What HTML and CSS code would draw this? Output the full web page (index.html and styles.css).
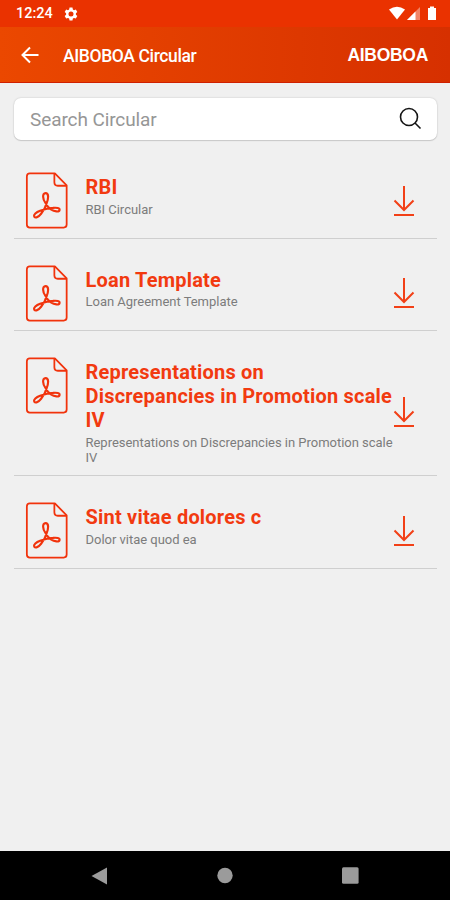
FILE: index.html
```
<!DOCTYPE html>
<html lang="en">

<head>
    <meta charset="UTF-8">
    <meta name="viewport" content="width=device-width, initial-scale=1.0">
    <title>AIBOBOA Circular</title>
    <link rel="stylesheet" href="styles.css">
</head>

<body>
    <!-- Shared icons -->
    <svg class="icon-defs" aria-hidden="true">
        <symbol id="pdf" viewBox="0 0 44 58">
            <path d="M4.500 1.500H30L42 13.500V53.500Q42 56.500 39 56.500H4.500Q1.500 56.500 1.500 53.500V4.500Q1.500 1.500 4.500 1.500Z" />
            <path d="M29.500 2V10.500Q29.500 14 33 14H41.500" />
            <path class="mark" d="M20.500 31.500C17.500 28 17 21.500 20.500 21.500C24.200 21.500 23.500 27.500 21.500 32C20.200 37 18.500 39.500 16 42.500C13.500 45.500 10.500 47.500 9 45.500C8 43.500 11 41 15 39.500C19 38 24 36.700 28 36.500C32 36.200 35 36.500 34.800 38.500C34.500 41 29.500 40.500 26 38C23.500 36.200 21.500 34 20.500 31.500Z" />
        </symbol>
        <symbol id="download" viewBox="0 0 22 32">
            <path d="M11 1V25M1.500 15.500L11 25L20.500 15.500M1 30H21" />
        </symbol>
    </svg>

    <div class="status-bar">
        <span class="time">12:24</span>
        <svg class="gear" viewBox="0 0 24 24">
            <path fill-rule="evenodd" d="M9.500 1h5l.7 3.200 2 1.200 3.100-1 2.500 4.300-2.400 2.200v2.300l2.400 2.200-2.500 4.300-3.100-1-2 1.200-.7 3.200h-5l-.7-3.200-2-1.200-3.100 1-2.500-4.300 2.400-2.200v-2.300L1.200 8.700l2.500-4.300 3.100 1 2-1.200ZM12 7.700a4.300 4.300 0 1 0 0 8.600a4.300 4.300 0 1 0 0-8.600Z" />
        </svg>
        <svg class="signals" viewBox="0 0 48 16">
            <path d="M0 3.500Q8 -2 16 3.500L8 13.500Z" />
            <path class="faint" d="M18 14L31 1V14Z" />
            <path d="M18 14L26.500 5.500V14Z" />
            <path d="M39 2H41V.5H45V2H47V14H39Z" />
        </svg>
    </div>

    <header class="app-bar">
        <svg class="back" viewBox="0 0 18 18">
            <path d="M17.500 9H1.500M9 1.500L1.500 9L9 16.500" />
        </svg>
        <h1>AIBOBOA Circular</h1>
        <span class="brand">AIBOBOA</span>
    </header>

    <main>
        <div class="search">
            <input type="text" placeholder="Search Circular">
            <svg viewBox="0 0 24 24">
                <circle cx="11" cy="10" r="8.500" />
                <path d="M17 16L22.500 21.500" />
            </svg>
        </div>

        <ul class="list">
            <li>
                <svg class="pdf"><use href="#pdf" /></svg>
                <div class="info">
                    <h2>RBI</h2>
                    <p>RBI Circular</p>
                </div>
                <svg class="download"><use href="#download" /></svg>
            </li>
            <li>
                <svg class="pdf"><use href="#pdf" /></svg>
                <div class="info">
                    <h2>Loan Template</h2>
                    <p>Loan Agreement Template</p>
                </div>
                <svg class="download"><use href="#download" /></svg>
            </li>
            <li>
                <svg class="pdf"><use href="#pdf" /></svg>
                <div class="info">
                    <h2>Representations on Discrepancies in Promotion scale IV</h2>
                    <p>Representations on Discrepancies in Promotion scale IV</p>
                </div>
                <svg class="download"><use href="#download" /></svg>
            </li>
            <li>
                <svg class="pdf"><use href="#pdf" /></svg>
                <div class="info">
                    <h2>Sint vitae dolores c</h2>
                    <p>Dolor vitae quod ea</p>
                </div>
                <svg class="download"><use href="#download" /></svg>
            </li>
        </ul>
    </main>

    <nav class="nav-bar">
        <svg viewBox="0 0 18 18"><path d="M.5 9L16 .5V17.500Z" /></svg>
        <svg viewBox="0 0 18 18"><circle cx="9" cy="8.500" r="7.700" /></svg>
        <svg viewBox="0 0 18 18"><rect x="1" y=".2" width="16.600" height="16.600" rx="1.500" /></svg>
    </nav>
</body>

</html>
```
FILE: styles.css
```
* {
    box-sizing: border-box;
}

body {
    font-family: Roboto, sans-serif;
    background-color: #f0f0f0;
    margin: 0;
    height: 900px;
    display: flex;
    flex-direction: column;
    overflow: hidden;
}

h1,
h2,
p,
ul {
    margin: 0;
    padding: 0;
}

svg {
    display: block;
    flex-shrink: 0;
}

.icon-defs {
    position: absolute;
    width: 0;
    height: 0;
}

/* Status bar */
.status-bar {
    height: 27px;
    padding: 0 13px 0 16px;
    display: flex;
    align-items: center;
    background-color: #ea3200;
    color: #fff;
    fill: #fff;
}

.time {
    font-size: 14.5px;
    font-weight: 500;
    width: 48px;
}

.gear {
    width: 14px;
    height: 14px;
}

.signals {
    width: 48px;
    height: 16px;
    margin-left: auto;
}

.faint {
    opacity: 0.4;
}

/* Header */
.app-bar {
    height: 56px;
    padding: 0 22px 0 21px;
    display: flex;
    align-items: center;
    background: linear-gradient(to right, #eb4800, #d63000);
    border-bottom: 1px solid #cf2000;
    color: #fff;
}

.back {
    width: 18px;
    height: 18px;
    fill: none;
    stroke: #fff;
    stroke-width: 2;
}

h1 {
    margin-left: 24px;
    padding-top: 2px;
    font-size: 17.5px;
    font-weight: 500;
    letter-spacing: -0.38px;
}

.brand {
    margin-left: auto;
    padding-top: 1px;
    font-family: "Liberation Sans", Arial, sans-serif;
    font-size: 17.5px;
    font-weight: bold;
    letter-spacing: -0.3px;
}

/* Content */
main {
    flex: 1;
    padding: 15px 13px 0 14px;
}

.search {
    height: 42px;
    padding: 0 15px 0 16px;
    display: flex;
    align-items: center;
    background-color: #fff;
    border-radius: 7px;
    box-shadow: 0 0 2px rgba(0, 0, 0, 0.2), 0 1px 1px rgba(0, 0, 0, 0.12);
}

.search input {
    flex: 1;
    min-width: 0;
    padding: 0;
    border: 0;
    outline: 0;
    font-family: inherit;
    font-size: 19px;
    letter-spacing: -0.1px;
}

.search input::placeholder {
    color: #969696;
}

.search svg {
    width: 24px;
    height: 24px;
    fill: none;
    stroke: #151515;
    stroke-width: 1.6;
}

.list {
    list-style: none;
    padding-top: 6px;
}

.list li {
    display: flex;
    align-items: center;
    min-height: 92.6px;
    padding: 26px 22px 8.6px 11px;
    border-bottom: 1.5px solid #cfcfcf;
}

.pdf {
    width: 44px;
    height: 57px;
    align-self: flex-start;
    fill: none;
    stroke: #f1330c;
    stroke-width: 1.8;
    stroke-linejoin: round;
}

.mark {
    stroke-width: 2.2;
}

.info {
    align-self: flex-start;
    width: 310px;
    margin: 3px -3px 0 16.5px;
    padding-bottom: 1.8px;
}

h2 {
    color: #f23a10;
    font-size: 20px;
    font-weight: 700;
    line-height: 24px;
    letter-spacing: 0.2px;
}

.info p {
    margin-top: 2.6px;
    color: #7c7c7c;
    font-size: 13px;
    line-height: 15px;
    letter-spacing: -0.02px;
}

.download {
    width: 22px;
    height: 32px;
    margin-left: auto;
    fill: none;
    stroke: #f24017;
    stroke-width: 2;
}

/* Bottom navigation */
.nav-bar {
    height: 49px;
    padding: 0 91px;
    display: flex;
    align-items: center;
    justify-content: space-between;
    background-color: #000;
    fill: #9b9b9b;
}

.nav-bar svg {
    width: 18px;
    height: 18px;
}
```
